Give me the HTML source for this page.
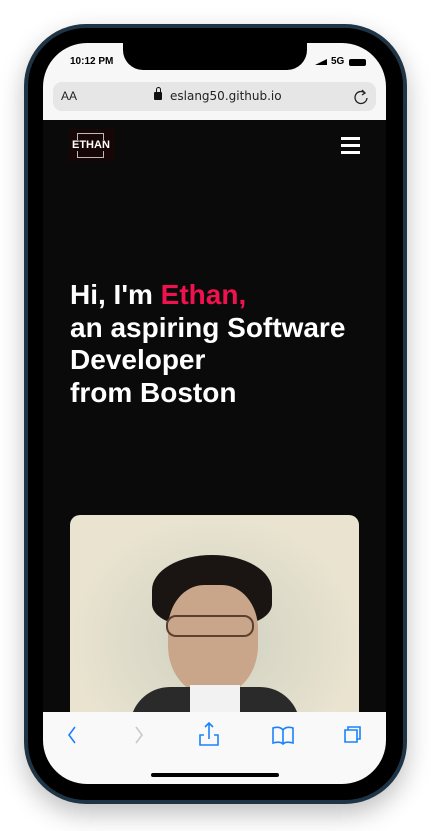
<!DOCTYPE html>
<html><head><style>
*{margin:0;padding:0;box-sizing:border-box}
body{width:431px;height:831px;background:#fff;position:relative;overflow:hidden;font-family:"Liberation Sans",sans-serif}
.frame{position:absolute;left:24px;top:24px;width:383px;height:780px;border-radius:62px;background:#1f3444;box-shadow:0 10px 25px rgba(0,0,0,.25)}
.bezel{position:absolute;left:28px;top:28px;width:375px;height:772px;border-radius:58px;background:#000}
.screen{position:absolute;left:43px;top:43px;width:343px;height:741px;border-radius:44px;background:#0a0a0a;overflow:hidden}
.top{position:absolute;left:0;top:0;width:343px;height:77px;background:#f7f7f7}
.notch{position:absolute;left:80px;top:0;width:184px;height:27px;background:#000;border-radius:0 0 20px 20px}
.url{position:absolute;left:10px;top:39px;width:323px;height:29px;background:#e6e6e6;border-radius:9px;font-size:13px;color:#222}
.h{position:absolute;left:27px;top:236px;color:#fff;font-weight:bold;font-size:28px;line-height:32.5px}
.photo{position:absolute;left:27px;top:472px;width:289px;height:210px;border-radius:10px 10px 0 0;background:radial-gradient(ellipse at 50% 60%,#cfd0c0,#e9e3d0 70%);overflow:hidden}
.bot{position:absolute;left:0;top:669px;width:343px;height:72px;background:#f9f9f9}
</style></head><body>
<div class="frame"></div><div class="bezel"></div>
<div class="screen">
 <div class="top">
  <div class="notch"></div>
  <div style="position:absolute;left:27px;top:13px;font-size:10px;font-weight:bold">10:12 PM</div>
  <div style="position:absolute;left:272px;top:16px;width:12px;height:6px;border-bottom:6px solid #000;clip-path:polygon(0 100%,100% 0,100% 100%)"></div>
  <div style="position:absolute;left:288px;top:13px;font-size:10px;font-weight:bold">5G</div>
  <div style="position:absolute;left:306px;top:16px;width:17px;height:7px;background:#000;border-radius:2px"></div>
  <div class="url">
   <span style="position:absolute;left:8px;top:7px;font-size:12px">AA</span>
   <span style="position:absolute;left:101px;top:10px;width:8px;height:8px;background:#111;border-radius:1px"></span>
   <span style="position:absolute;left:103px;top:5px;width:5px;height:7px;border:1.5px solid #111;border-radius:3px 3px 0 0"></span>
   <span style="position:absolute;left:117px;top:7px;font-family:'DejaVu Sans',sans-serif;font-size:12px">eslang50.github.io</span>
   <svg style="position:absolute;left:300px;top:6px" width="16" height="17" viewBox="0 0 16 17"><path d="M12 5A6 6 0 1 0 14 10" fill="none" stroke="#222" stroke-width="1.3"/><path d="M9 2l3 3-3 2" fill="none" stroke="#222" stroke-width="1.3"/></svg>
  </div>
 </div>
 <div style="position:absolute;left:26px;top:86px;width:45px;height:32px;background:#160606"></div>
 <div style="position:absolute;left:34px;top:90px;width:27px;height:25px;border:1px solid #bbb"></div>
 <div style="position:absolute;left:26px;top:97px;width:45px;height:11px;background:#160606"></div>
 <div style="position:absolute;left:29px;top:96px;color:#fff;font-size:11px;font-weight:bold">ETHAN</div>
 <div style="position:absolute;left:298px;top:94px;width:19px;height:3px;background:#fff;box-shadow:0 7px 0 #fff,0 14px 0 #fff"></div>
 <div class="h">Hi, I'm <span style="color:#f0124e">Ethan,</span><br>an aspiring Software<br>Developer<br>from Boston</div>
 <div class="photo">
  <div style="position:absolute;left:82px;top:40px;width:120px;height:70px;background:#1a1512;border-radius:50% 50% 30% 30%"></div>
  <div style="position:absolute;left:98px;top:70px;width:90px;height:110px;background:#c9a58a;border-radius:40% 40% 45% 45%"></div>
  <div style="position:absolute;left:96px;top:100px;width:88px;height:22px;border:2px solid #5a4030;border-radius:10px"></div>
  <div style="position:absolute;left:60px;top:172px;width:170px;height:50px;background:#2a2a2a;border-radius:40px 40px 0 0"></div>
  <div style="position:absolute;left:120px;top:170px;width:50px;height:50px;background:#f2f2f2"></div>
 </div>
 <div class="bot">
  <svg width="343" height="72" viewBox="0 0 343 72" style="position:absolute;left:0;top:0">
   <g fill="none" stroke="#1a82fb" stroke-width="1.6">
    <path d="M32 15l-6 8 6 8"/>
    <path d="M161 23h-4v10h18v-10h-4M166 27v-16M162 15l4-4 4 4"/>
    <path d="M230 16q7-2 10 2q3-4 10-2v15q-7-2-10 1q-3-3-10-1zM240 18v14"/>
    <path d="M305 18v-3h12v12h-3M305 18h9v12h-12v-12h3"/>
   </g>
   <path d="M93 15l6 8-6 8" fill="none" stroke="#c8c8c8" stroke-width="1.6"/>
   <rect x="108" y="61" width="128" height="4" rx="2" fill="#000"/>
  </svg>
 </div>
</div>
</body></html>
